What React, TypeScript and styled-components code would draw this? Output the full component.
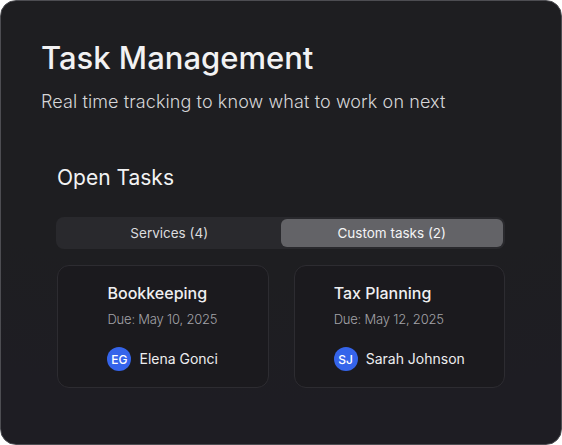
import styled, { createGlobalStyle } from "styled-components";

const GlobalStyle = createGlobalStyle`
  html, body {
    margin: 0;
    padding: 0;
    background: #ffffff;
  }
  * {
    box-sizing: border-box;
  }
`;

const Panel = styled.div`
  width: 562px;
  height: 445px;
  border: 1px solid #4d4d52;
  border-radius: 16px;
  background: radial-gradient(130% 90% at 50% 0%, #1e1e21 70%, #1e1d23 100%);
  padding: 39px 40px 0 40px;
  font-family: Inter, "Noto Sans", sans-serif;
  color: #f2f2f3;
  overflow: hidden;
`;

const Title = styled.h1`
  margin: 0;
  font-size: 31px;
  line-height: 36px;
  font-weight: 500;
  letter-spacing: 0;
`;

const Subtitle = styled.p`
  margin: 14px 0 0 0;
  font-size: 18px;
  line-height: 24px;
  font-weight: 300;
  color: #d6d6d8;
  letter-spacing: 0.1px;
`;

const Section = styled.section`
  margin-top: 50px;
  padding: 0 16px 0 15px;
`;

const SectionTitle = styled.h2`
  margin: 0 0 0 1px;
  font-size: 21px;
  line-height: 28px;
  font-weight: 400;
`;

const TabBar = styled.div`
  margin-top: 25px;
  height: 32px;
  padding: 2px;
  border-radius: 8px;
  background: #29292d;
  display: grid;
  grid-template-columns: 1fr 1fr;
`;

const Tab = styled.button<{ $active?: boolean }>`
  border: none;
  border-radius: 6px;
  background: ${p => (p.$active ? "#636367" : "transparent")};
  color: ${p => (p.$active ? "#f4f4f5" : "#dcdcde")};
  font-family: inherit;
  font-size: 13.5px;
  font-weight: 400;
  padding: 0;
  cursor: pointer;
`;

const CardGrid = styled.div`
  margin-top: 16px;
  display: grid;
  grid-template-columns: 1fr 1fr;
  gap: 25px;
  padding-left: 1px;
`;

const Card = styled.div`
  height: 123px;
  border: 1px solid #2d2c31;
  border-radius: 12px;
  background: #1b1a1e;
  padding: 16px;
  display: flex;
  justify-content: center;
`;

const CardBody = styled.div`
  display: flex;
  flex-direction: column;
  align-items: flex-start;
`;

const CardTitle = styled.div`
  font-size: 16px;
  line-height: 22px;
  font-weight: 500;
  color: #efeff1;
`;

const DueDate = styled.div`
  margin-top: 5px;
  font-size: 13px;
  line-height: 20px;
  font-weight: 300;
  color: #a3a3a8;
  letter-spacing: -0.2px;
`;

const Assignee = styled.div`
  margin-top: 18px;
  display: flex;
  align-items: center;
  gap: 8px;
`;

const Avatar = styled.div`
  width: 24px;
  height: 24px;
  border-radius: 50%;
  background: #3564ea;
  color: #ffffff;
  font-size: 12px;
  font-weight: 500;
  display: flex;
  align-items: center;
  justify-content: center;
`;

const Name = styled.span`
  font-size: 14px;
  line-height: 20px;
  color: #ededef;
`;

const tasks = [
  { title: "Bookkeeping", due: "May 10, 2025", initials: "EG", name: "Elena Gonci" },
  { title: "Tax Planning", due: "May 12, 2025", initials: "SJ", name: "Sarah Johnson" },
];

const App = () => {
  return (
    <>
      <GlobalStyle />
      <Panel>
        <Title>Task Management</Title>
        <Subtitle>Real time tracking to know what to work on next</Subtitle>
        <Section>
          <SectionTitle>Open Tasks</SectionTitle>
          <TabBar>
            <Tab>Services (4)</Tab>
            <Tab $active>Custom tasks (2)</Tab>
          </TabBar>
          <CardGrid>
            {tasks.map(t => (
              <Card key={t.title}>
                <CardBody>
                  <CardTitle>{t.title}</CardTitle>
                  <DueDate>Due: {t.due}</DueDate>
                  <Assignee>
                    <Avatar>{t.initials}</Avatar>
                    <Name>{t.name}</Name>
                  </Assignee>
                </CardBody>
              </Card>
            ))}
          </CardGrid>
        </Section>
      </Panel>
    </>
  );
};

export default App;
